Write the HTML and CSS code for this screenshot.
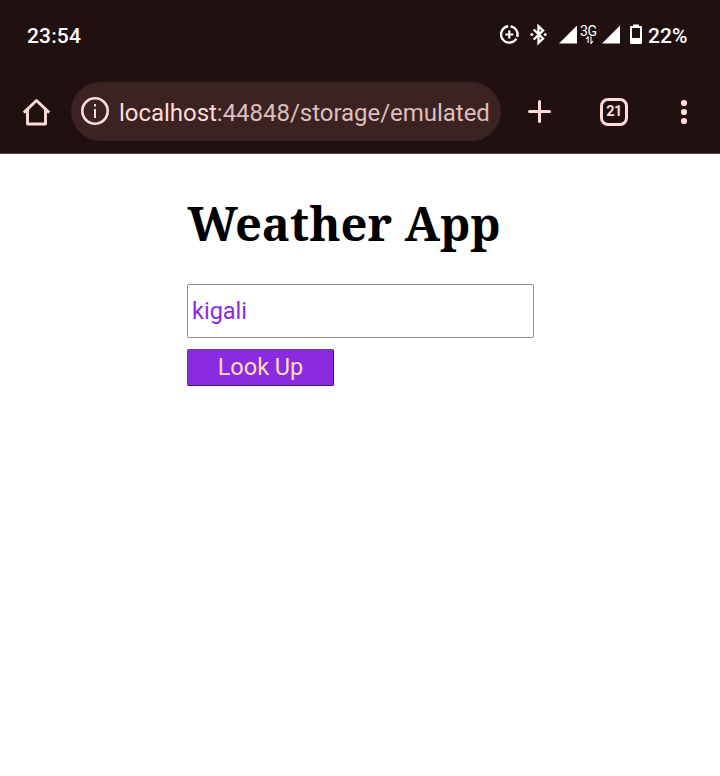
FILE: index.html
```html
<!DOCTYPE html>
<html lang="en">
<head>
<meta charset="utf-8">
<title>Weather App</title>
<link rel="stylesheet" href="styles.css">
</head>
<body>
<header class="chrome">
  <div class="status">
    <span class="clock">23:54</span>
    <svg class="indicators" width="148" height="26" viewBox="0 0 148 26" fill="#fff" aria-hidden="true">
      <g fill="none" stroke="#fff" stroke-width="2.4">
        <path d="M8.200 4.300A8.200 8.200 0 1 0 16.300 16.700M17.200 14.900A8.200 8.200 0 0 0 10.600 4.400"/>
        <path d="M9.300 8.500v8M5.300 12.500h8" stroke-width="2.2"/>
        <path d="M33.700 7.500l9.300 9-4.500 4.300V4.200l4.500 4.300-9.300 9" stroke-width="2.4"/>
      </g>
      <circle cx="31.800" cy="12.500" r="1.500"/><circle cx="45.200" cy="12.500" r="1.500"/>
      <path d="M59 21.5L77 3.5v18zM102 21.5l18-18v18z"/>
      <path d="M88.200 14.500v6.500M86.300 17l1.900-2.300M91 14.500v7.500M91 21.500l1.900-2.300" fill="none" stroke="#fff" stroke-width="1.100"/>
      <path fill-rule="evenodd" d="M133 2.500h6v1.500h2q1 0 1 1V21q0 1-1 1h-10q-1 0-1-1V5q0-1 1-1h2zM132 6v10h8V6z"/>
    </svg>
    <span class="network">3G</span>
    <span class="charge">22%</span>
  </div>
  <nav class="toolbar">
    <svg class="home" width="30" height="30" viewBox="0 0 30 30" fill="none" stroke="#ffdad8" stroke-width="2.9" stroke-linejoin="round" aria-hidden="true"><path d="M2.8 15.6L15.5 3.500l12.700 12.100M6.500 12.500v14.500h18V12.500"/></svg>
    <div class="address">
      <svg width="28" height="28" viewBox="0 0 28 28" aria-hidden="true"><circle cx="14" cy="14" r="12.7" fill="none" stroke="#ffdad8" stroke-width="2.6"/><path d="M13 12h2v9h-2zM13 7h2v2.5h-2z" fill="#ffdad8"/></svg>
      <span class="url"><b>localhost</b>:44848/storage/emulated</span>
    </div>
    <svg class="plus" width="24" height="24" viewBox="0 0 24 24" fill="none" stroke="#ffdad8" stroke-width="3" stroke-linecap="round" aria-hidden="true"><path d="M11.500 1.500v20M1.500 11.500h20"/></svg>
    <span class="tabs">21</span>
    <svg class="more" width="8" height="26" viewBox="0 0 8 26" fill="#ffdad8" aria-hidden="true"><circle cx="4" cy="4" r="3.1"/><circle cx="4" cy="13" r="3.1"/><circle cx="4" cy="22" r="3.1"/></svg>
  </nav>
</header>
<main class="app">
  <h1>Weather App</h1>
  <input class="city" type="text" value="kigali" aria-label="City">
  <button class="lookup" type="button">Look Up</button>
</main>
</body>
</html>
```
FILE: styles.css
```css
* { box-sizing: border-box; }
body { margin: 0; background: #fff; font-family: Roboto, sans-serif; }
.chrome { height: 154px; background: #201010; border-bottom: 1px solid #5a4644; }
.status { position: relative; display: flex; align-items: center; height: 70px; padding: 0 32px 0 27px; color: #fff; font-size: 21px; font-weight: 500; }
.clock { margin: 2px auto 0 0; letter-spacing: .15px; }
.network { position: absolute; left: 580px; top: 23px; font-size: 14px; line-height: 16px; font-weight: 400; letter-spacing: -.3px; }
.charge { width: 40px; margin-top: 2px; white-space: nowrap; letter-spacing: .1px; }
.toolbar { display: flex; align-items: center; height: 83px; padding: 0 32px 0 21px; }
.home { margin-right: 20px; }
.address { display: flex; align-items: center; width: 430px; height: 59px; padding: 0 11px 0 10px; border-radius: 30px; background: #3a2322; }
.address svg { flex: none; margin: -2px 10px 0 0; }
.url { flex: 1; white-space: nowrap; font-size: 24px; line-height: 34px; letter-spacing: -.03px; color: #dfbfbc; padding-top: 2px; }
.url b { font-weight: 400; color: #ffdad8; }
.plus { margin-left: 27px; }
.tabs { display: grid; place-items: center; width: 28px; height: 28px; margin-left: 48px; border: 3px solid #ffdad8; border-radius: 8px; color: #ffdad8; font-size: 14.5px; line-height: 20px; font-weight: 700; letter-spacing: -.5px; }
.more { margin-left: auto; }
.app { display: flex; flex-direction: column; align-items: flex-start; width: 347px; margin-left: 187.5px; padding-top: 36px; }
h1 { margin: 0 0 28px; font-family: "Noto Serif", "DejaVu Serif", serif; font-size: 47.1px; line-height: 66px; font-weight: 700; white-space: nowrap; }
.city { width: 347px; height: 54px; margin-left: -.5px; padding: 0 4px; border: 1px solid #8e8e8e; border-radius: 2px; outline: 0; background: #fff; color: #8a2be2; font: 23.5px Roboto, sans-serif; }
.lookup { width: 147px; height: 37px; margin: 11px 0 0 -.5px; padding: 0 0 1px; border: 1px solid #68418b; border-right-color: #42136f; border-bottom-color: #42136f; border-radius: 2px; background: #8a2be2; color: #ffdead; font: 23.5px Roboto, sans-serif; }
```
